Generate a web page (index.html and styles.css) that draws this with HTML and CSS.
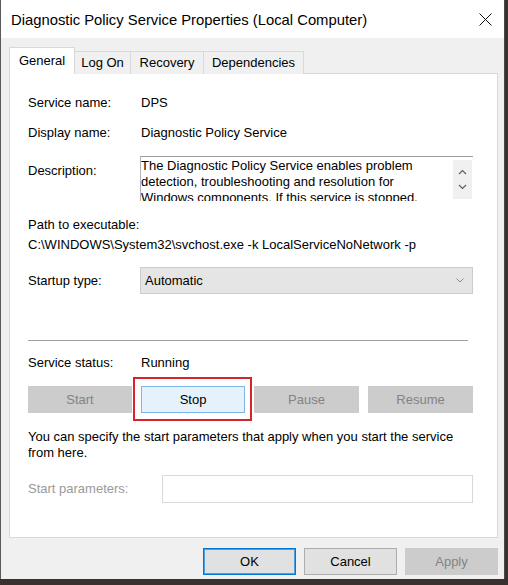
FILE: index.html
```html
<!DOCTYPE html>
<html lang="en">
<head>
    <meta charset="UTF-8">
    <title>Diagnostic Policy Service Properties (Local Computer)</title>
    <link rel="stylesheet" href="styles.css">
</head>
<body>
    <div class="window">
        <div class="titlebar">
            <span class="title">Diagnostic Policy Service Properties (Local Computer)</span>
            <span class="close">
                <svg width="13" height="13" viewBox="0 0 13 13"><path d="M0.5 0.5 L12.5 12.5 M12.5 0.5 L0.5 12.5" stroke="#111" stroke-width="1" fill="none"/></svg>
            </span>
        </div>

        <div class="dialog">
            <div class="tabs">
                <div class="tab active tab-general">General</div>
                <div class="tab tab-logon">Log On</div>
                <div class="tab tab-recovery">Recovery</div>
                <div class="tab tab-deps">Dependencies</div>
            </div>

            <div class="panel">
                <div class="row first">
                    <span class="label">Service name:</span>
                    <span class="value">DPS</span>
                </div>
                <div class="row">
                    <span class="label">Display name:</span>
                    <span class="value">Diagnostic Policy Service</span>
                </div>
                <div class="row desc-row">
                    <span class="label desc-label">Description:</span>
                    <div class="desc-box">
                        <div class="desc-text">The Diagnostic Policy Service enables problem<br>detection, troubleshooting and resolution for<br>Windows components.  If this service is stopped,<br>diagnostics will no longer function.</div>
                        <div class="scroll">
                            <svg width="9" height="6" viewBox="0 0 9 6"><path d="M1 5 L4.5 1.5 L8 5" stroke="#606060" stroke-width="1.2" fill="none"/></svg>
                            <svg width="9" height="6" viewBox="0 0 9 6"><path d="M1 1 L4.5 4.5 L8 1" stroke="#606060" stroke-width="1.2" fill="none"/></svg>
                        </div>
                    </div>
                </div>
                <div class="path-label">Path to executable:</div>
                <div class="path">C:\WINDOWS\System32\svchost.exe -k LocalServiceNoNetwork -p</div>
                <div class="row startup-row">
                    <span class="label">Startup type:</span>
                    <div class="combo">
                        <span>Automatic</span>
                        <svg width="8" height="5" viewBox="0 0 8 5"><path d="M0.5 0.5 L4 4 L7.5 0.5" stroke="#8a8a8a" stroke-width="1" fill="none"/></svg>
                    </div>
                </div>

                <div class="separator"></div>

                <div class="row status-row">
                    <span class="label">Service status:</span>
                    <span class="value">Running</span>
                </div>
                <div class="service-buttons">
                    <div class="btn disabled">Start</div>
                    <div class="stop-wrap"><div class="btn hot">Stop</div></div>
                    <div class="btn disabled">Pause</div>
                    <div class="btn disabled">Resume</div>
                </div>

                <p class="hint">You can specify the start parameters that apply when you start the service<br>from here.</p>

                <div class="row params-row">
                    <span class="label params-label">Start parameters:</span>
                    <div class="params-input"></div>
                </div>
            </div>

            <div class="footer">
                <div class="btn default">OK</div>
                <div class="btn">Cancel</div>
                <div class="btn disabled">Apply</div>
            </div>
        </div>
    </div>
</body>
</html>
```

FILE: styles.css
```css
html {
    background-color: #3a302e;
}
body {
    margin: 0;
    padding: 0;
    font-family: "Liberation Sans", Arial, sans-serif;
    font-size: 13px;
    color: #000;
}
.window {
    width: 505px;
    height: 579px;
    box-sizing: border-box;
    border-left: 1px solid #5a5a5a;
    border-right: 1px solid #4a4a4a;
    background-color: #f0f0f0;
    display: flex;
    flex-direction: column;
}
.titlebar {
    height: 38px;
    background-color: #fff;
    display: flex;
    align-items: center;
    justify-content: space-between;
    padding: 0 12px 0 10px;
    flex-shrink: 0;
}
.title {
    font-size: 14.8px;
    color: #000;
    padding-top: 1px;
}
.close {
    display: flex;
    padding-top: 1px;
}

.dialog {
    display: flex;
    flex-direction: column;
    flex: 1;
}
.tabs {
    display: flex;
    align-items: flex-end;
    padding: 9px 0 0 8px;
    margin-bottom: -1px;
    z-index: 1;
}
.tab {
    height: 23px;
    line-height: 22px;
    text-align: center;
    box-sizing: border-box;
    border: 1px solid #d9d9d9;
    border-bottom: none;
    background-color: #f0f0f0;
    margin-left: -1px;
}
.tab:first-child {
    margin-left: 0;
}
.tab.active {
    height: 27px;
    line-height: 25px;
    background-color: #fff;
    z-index: 1;
}
.tab-general { width: 66px; }
.tab-logon { width: 57px; }
.tab-recovery { width: 74px; }
.tab-deps { width: 101px; }

.panel {
    margin: 0 6px 0 8px;
    height: 465px;
    box-sizing: border-box;
    border: 1px solid #d9d9d9;
    background-color: #fff;
    padding: 21px 24px 0 18px;
}
.row {
    display: flex;
    align-items: center;
    line-height: 16px;
    margin-top: 14px;
}
.row.first {
    margin-top: 0;
}
.label {
    width: 112px;
    flex-shrink: 0;
}
.value {
    padding-left: 1px;
}

.desc-row {
    align-items: flex-start;
    margin-top: 15px;
}
.desc-label {
    padding-top: 7px;
}
.desc-box {
    flex: 1;
    height: 44px;
    overflow: hidden;
    border-top: 1px solid #9e9e9e;
    border-left: 1px solid #b4b4b4;
    display: flex;
}
.desc-text {
    flex: 1;
    padding: 1px 0 0 0;
    white-space: nowrap;
    overflow: hidden;
}
.scroll {
    width: 19px;
    margin: 3px 1px 2px 0;
    background-color: #f0f0f0;
    display: flex;
    flex-direction: column;
    align-items: center;
    justify-content: space-around;
    padding: 4px 0 5px;
    box-sizing: border-box;
}

.path-label {
    margin-top: 16px;
    line-height: 16px;
}
.path {
    margin-top: 4px;
    line-height: 16px;
}

.startup-row {
    margin-top: 14px;
}
.combo {
    flex: 1;
    height: 27px;
    box-sizing: border-box;
    background-color: #e5e5e5;
    border: 1px solid #cccccc;
    display: flex;
    align-items: center;
    justify-content: space-between;
    padding: 0 8px 0 4px;
}

.separator {
    margin: 46px 5px 0 0;
    height: 1px;
    background-color: #a0a0a0;
}

.status-row {
    margin-top: 14px;
}

.service-buttons {
    display: grid;
    grid-template-columns: 104px 104px 105px 105px;
    column-gap: 9px;
    margin-top: 15px;
}
.btn {
    height: 27px;
    box-sizing: border-box;
    border: 1px solid #adadad;
    background-color: #e1e1e1;
    display: flex;
    align-items: center;
    justify-content: center;
}
.btn.disabled {
    background-color: #cccccc;
    border-color: #cccccc;
    color: #838383;
}
.btn.hot {
    background-color: #e5f1fb;
    border-color: #7fb6e6;
}
.btn.default {
    border-color: #0078d7;
    box-shadow: inset 0 0 0 1px #4aa0e2;
}
.stop-wrap {
    position: relative;
}
.stop-wrap::after {
    content: "";
    position: absolute;
    top: -9px;
    bottom: -8px;
    left: -8px;
    right: -7px;
    border: 2.5px solid #d8232a;
}

.hint {
    margin: 16px 0 0;
    line-height: 16px;
}

.params-row {
    margin-top: 14px;
}
.params-label {
    width: 134px;
    color: #9a9a9a;
}
.params-input {
    flex: 1;
    height: 28px;
    box-sizing: border-box;
    border: 1px solid #d9d9d9;
    background-color: #fff;
}

.footer {
    display: flex;
    justify-content: flex-end;
    gap: 8px;
    margin: 10px 6px 0 0;
}
.footer .btn {
    width: 93px;
}
```
